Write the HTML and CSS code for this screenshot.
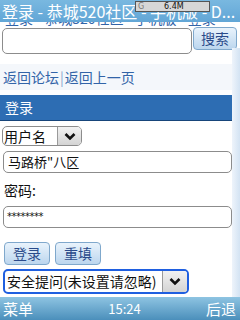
FILE: index.html
```html
<!DOCTYPE html>
<html>
<head>
<meta charset="utf-8">
<link rel="stylesheet" href="styles.css">
</head>
<body>
<div class="screen">
  <div class="titlebar">
    <span class="title">登录 - 恭城520社区 - 手机版 - D...</span>
    <div class="mem"><span class="mem-g">G</span><span class="mem-v">6.4M</span></div>
  </div>
  <div class="page">
    <div class="cutline">登录 - 恭城520社区 - 手机版 - 登录</div>
    <div class="search">
      <div class="input search-input"></div>
      <div class="btn search-btn">搜索</div>
    </div>
    <div class="body">
      <div class="content">
        <div class="nav"><span>返回论坛</span><span class="sep">|</span><span>返回上一页</span></div>
        <div class="head">登录</div>
        <div class="select sel-user"><span class="sel-text">用户名</span><span class="sel-arrow"><svg width="12" height="9" viewBox="0 0 12 9"><path d="M1.5 2 L6 6.5 L10.5 2" fill="none" stroke="#111" stroke-width="2.6"/></svg></span></div>
        <div class="input field">马路桥"八区</div>
        <div class="label">密码:</div>
        <div class="input field pwd">********</div>
        <div class="buttons">
          <div class="btn">登录</div>
          <div class="btn">重填</div>
        </div>
        <div class="select sel-q"><span class="sel-text">安全提问(未设置请忽略)</span><span class="sel-arrow"><svg width="12" height="9" viewBox="0 0 12 9"><path d="M1.5 2 L6 6.5 L10.5 2" fill="none" stroke="#111" stroke-width="2.6"/></svg></span></div>
      </div>
      <div class="scrollbar"></div>
    </div>
  </div>
  <div class="softbar">
    <span>菜单</span>
    <span class="clock">15:24</span>
    <span>后退</span>
  </div>
</div>
</body>
</html>
```
FILE: styles.css
```css
html, body {
  margin: 0;
  padding: 0;
  background: #fff;
}
.screen {
  width: 240px;
  height: 320px;
  overflow: hidden;
  display: flex;
  flex-direction: column;
  font-family: "Noto Sans CJK SC", "Noto Sans", sans-serif;
}
.titlebar {
  position: relative;
  z-index: 2;
  height: 22px;
  flex: 0 0 22px;
  background: linear-gradient(#79b8e0, #62a6d6);
  color: #fff;
  font-size: 16px;
  line-height: 22px;
  white-space: nowrap;
  overflow: hidden;
  padding-left: 2px;
}
.title {
  letter-spacing: 0;
}
.mem {
  position: absolute;
  left: 135px;
  top: 1px;
  width: 73px;
  height: 9px;
  background: #d6d6d6;
  border: 1px solid #555;
  font-family: "DejaVu Sans", sans-serif;
  font-size: 8px;
  line-height: 9px;
  color: #111;
}
.mem-g {
  position: absolute;
  left: 2px;
  top: 0;
  color: #777;
}
.mem-v {
  position: absolute;
  left: 28px;
  top: 0;
}
.page {
  flex: 1;
  display: flex;
  flex-direction: column;
  min-height: 0;
}
.cutline {
  margin-top: -12px;
  height: 17px;
  line-height: 17px;
  font-size: 14px;
  color: #3264a8;
  padding-left: 5px;
  white-space: nowrap;
  overflow: hidden;
}
.search {
  display: flex;
  align-items: flex-start;
  padding: 1px 3px 0 2px;
  gap: 1px;
  height: 26px;
}
.input {
  box-sizing: border-box;
  border: 1px solid #8c8c8c;
  border-radius: 5px;
  background: #fff;
}
.search-input {
  width: 190px;
  height: 26px;
}
.btn {
  box-sizing: border-box;
  border: 1px solid #7fa8cc;
  border-radius: 4px;
  background: linear-gradient(#e9f3fc, #bcd6ee);
  color: #2a4a8a;
  font-size: 14px;
  text-align: center;
  line-height: 21px;
}
.search-btn {
  width: 44px;
  height: 23px;
  margin-top: -1px;
}
.body {
  flex: 1;
  display: flex;
  min-height: 0;
}
.content {
  width: 232px;
  display: flex;
  flex-direction: column;
}
.scrollbar {
  width: 8px;
  margin-top: -6px;
  background: linear-gradient(90deg, #eef4fb, #d3e3f3);
}
.nav {
  margin-top: 10px;
  height: 26px;
  background: #f4f7fb;
  color: #3264a8;
  font-size: 14px;
  line-height: 26px;
  padding-left: 3px;
  white-space: nowrap;
}
.sep {
  color: #8aa6cc;
  margin: 0 1px;
}
.head {
  margin-top: 5px;
  height: 25px;
  background: #2d6db3;
  border-bottom: 1px solid #17457a;
  color: #fff;
  font-size: 14px;
  line-height: 25px;
  padding-left: 5px;
}
.select {
  box-sizing: border-box;
  display: flex;
  border: 1px solid #8c8c8c;
  border-radius: 5px;
  overflow: hidden;
  background: #fff;
}
.sel-text {
  flex: 1;
  font-size: 14px;
  color: #111;
  padding-left: 2px;
  white-space: nowrap;
}
.sel-arrow {
  width: 23px;
  border-left: 1px solid #9a9a9a;
  background: linear-gradient(#f2f2f2, #d4d4d4);
  display: flex;
  align-items: center;
  justify-content: center;
}
.sel-user {
  margin: 5px 0 0 2px;
  width: 80px;
  height: 20px;
  line-height: 18px;
}
.sel-user .sel-text {
  padding-left: 1px;
}
.field {
  margin: 5px 0 0 3px;
  width: 229px;
  height: 22px;
  font-size: 13px;
  line-height: 20px;
  color: #111;
  padding-left: 4px;
}
.label {
  margin-top: 9px;
  padding-left: 4px;
  font-size: 14px;
  height: 16px;
  line-height: 16px;
  color: #111;
}
.pwd {
  margin-top: 8px;
  font-family: "DejaVu Sans", sans-serif;
  font-size: 10px;
  letter-spacing: -0.5px;
  padding-left: 3px;
}
.buttons {
  display: flex;
  gap: 5px;
  margin: 14px 0 0 4px;
}
.buttons .btn {
  width: 46px;
  height: 23px;
}
.sel-q {
  margin: 4px 0 0 3px;
  width: 186px;
  height: 25px;
  border: 2px solid #1f5fe0;
  line-height: 21px;
}
.sel-q .sel-arrow {
  width: 24px;
}
.softbar {
  flex: 0 0 23px;
  height: 23px;
  background: linear-gradient(#8ec4e2, #4b8fbb);
  color: #fff;
  font-size: 15px;
  line-height: 23px;
  display: flex;
  justify-content: space-between;
  padding: 0 4px 0 3px;
}
.clock {
  font-size: 13px;
  padding-left: 10px;
}
```
